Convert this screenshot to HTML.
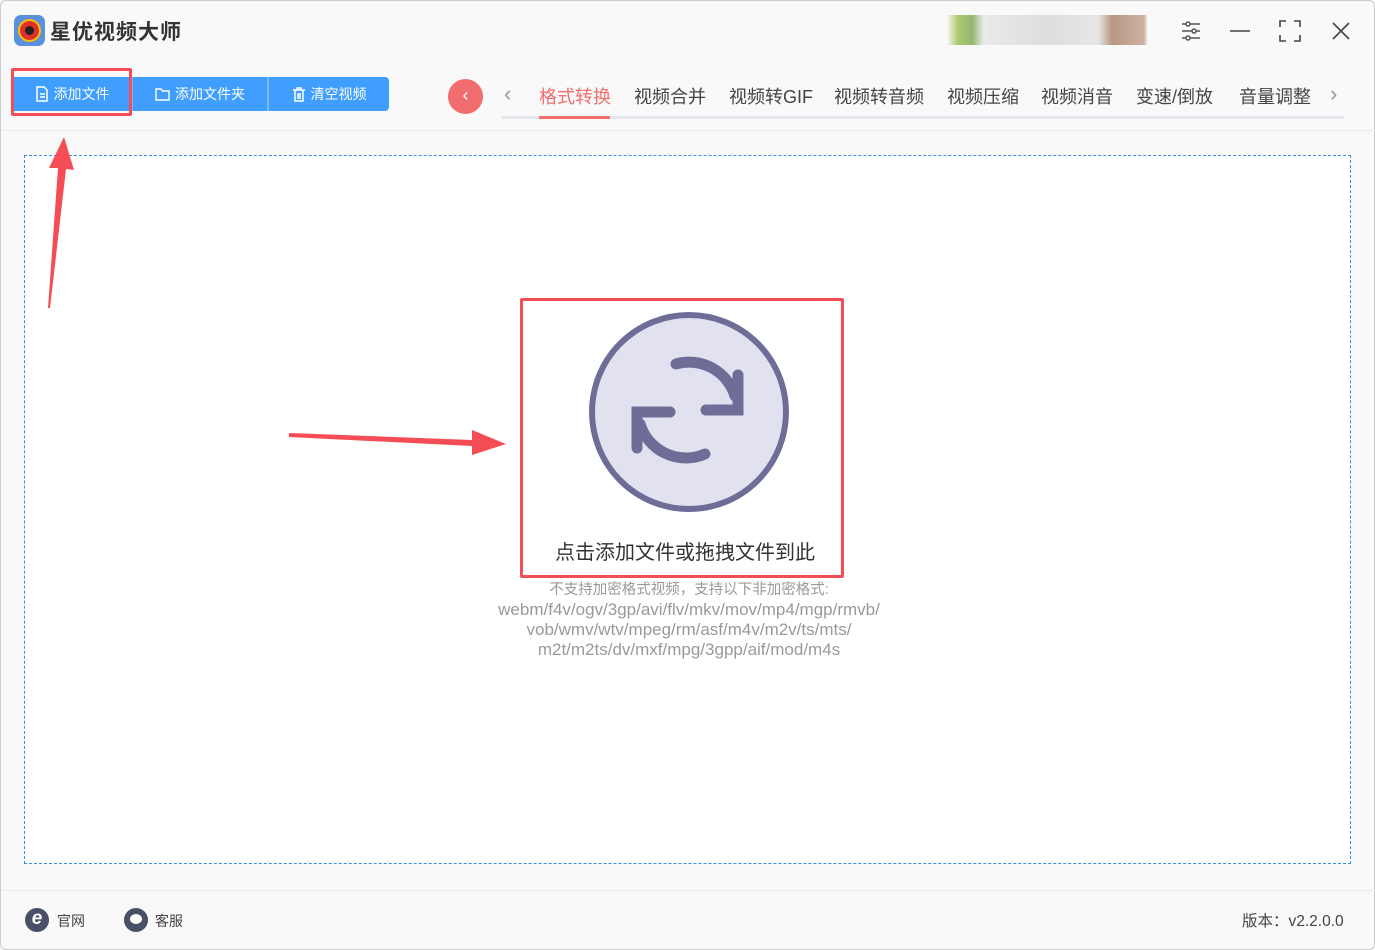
<!DOCTYPE html>
<html><head><meta charset="utf-8"><style>
*{margin:0;padding:0;box-sizing:border-box}
body{width:1375px;height:950px;background:#f9f9f9;font-family:"Liberation Sans","Noto Sans CJK SC",sans-serif;position:relative;overflow:hidden;border:1px solid #ccc;border-radius:6px}
.abs{position:absolute}
.title{left:49px;top:15px;font-size:21px;font-weight:bold;color:#333;letter-spacing:1px}
.btn{top:76px;height:34px;background:#409eff;color:#fff;font-size:14px;line-height:34px;text-align:center}
.tab{top:82px;font-size:18px;color:#444}
.fmt{width:100%;text-align:center;color:#999;font-size:17px;line-height:20px}
</style></head><body>
<div class="abs" style="left:13px;top:14px;width:31px;height:31px;border-radius:7px;background:#5b8fe0"></div>
<div class="abs" style="left:17px;top:18px;width:23px;height:23px;border-radius:50%;background:#f5c200"></div>
<div class="abs" style="left:19px;top:20px;width:19px;height:19px;border-radius:50%;background:#e0302b"></div>
<div class="abs" style="left:24px;top:25px;width:9px;height:9px;border-radius:50%;background:#222"></div>
<div class="abs title">星优视频大师</div>
<div class="abs" style="left:947px;top:14px;width:200px;height:30px;background:linear-gradient(90deg,#eef3e0 0,#9bbd4e 5%,#7aa64a 12%,#e6e6e6 18%,#d6d6d6 50%,#e2e2e2 75%,#a88068 82%,#c2a08a 98%,#fff 100%);opacity:.8"></div>
<svg class="abs" style="left:1179px;top:19px" width="22" height="22" viewBox="0 0 22 22" stroke="#555" stroke-width="1.5" fill="none"><path d="M2 4h18M2 11h18M2 18h18"/><circle cx="8" cy="4" r="2" fill="#fff"/><circle cx="14" cy="11" r="2" fill="#fff"/><circle cx="8" cy="18" r="2" fill="#fff"/></svg>
<svg class="abs" style="left:1227px;top:19px" width="24" height="22" stroke="#444" stroke-width="1.6" fill="none"><path d="M2 11h20"/></svg>
<svg class="abs" style="left:1277px;top:18px" width="24" height="24" stroke="#444" stroke-width="1.6" fill="none"><path d="M2 8V2h6M16 2h6v6M22 16v6h-6M8 22H2v-6"/></svg>
<svg class="abs" style="left:1329px;top:19px" width="22" height="22" stroke="#444" stroke-width="1.6" fill="none"><path d="M3 3l16 16M19 3L3 19"/></svg>

<div class="abs btn" style="left:13px;width:116px">
<svg width="14" height="16" style="vertical-align:-3px;margin-right:5px" stroke="#fff" stroke-width="1.5" fill="none"><path d="M2 1h7l3 3v11H2z M5 8h5M5 11h5"/></svg>添加文件</div>
<div class="abs btn" style="left:132px;width:134px">
<svg width="15" height="14" style="vertical-align:-2px;margin-right:5px" stroke="#fff" stroke-width="1.4" fill="none"><path d="M1 2h5l1.5 2H14v9H1z"/></svg>添加文件夹</div>
<div class="abs btn" style="left:268px;width:120px;border-radius:0 4px 4px 0">
<svg width="14" height="15" style="vertical-align:-3px;margin-right:5px" stroke="#fff" stroke-width="1.5" fill="none"><path d="M1 3h12M5 3V1h4v2M3 3v11h8V3M6 6v6M8 6v6"/></svg>清空视频</div>
<div class="abs" style="left:130px;top:76px;width:2px;height:34px;background:#7bb8ff"></div>
<div class="abs" style="left:266px;top:76px;width:2px;height:34px;background:#7bb8ff"></div>
<div class="abs" style="left:10px;top:67px;width:121px;height:48px;border:3px solid #f54d55;border-radius:2px"></div>

<div class="abs" style="left:447px;top:78px;width:35px;height:35px;border-radius:50%;background:#f26d6e;color:#fff;text-align:center;line-height:33px;font-size:18px">‹</div>
<div class="abs" style="left:503px;top:80px;color:#999;font-size:22px">‹</div>
<div class="abs" style="left:1329px;top:80px;color:#999;font-size:22px">›</div>
<div class="abs" style="left:501px;top:115px;width:842px;height:3px;background:#e3e6ec"></div>
<div class="abs" style="left:538px;top:115px;width:71px;height:3px;background:#f26d6e"></div>
<div class="abs tab" style="left:538px;color:#f26d6e">格式转换</div>
<div class="abs tab" style="left:633px">视频合并</div>
<div class="abs tab" style="left:728px">视频转GIF</div>
<div class="abs tab" style="left:833px">视频转音频</div>
<div class="abs tab" style="left:946px">视频压缩</div>
<div class="abs tab" style="left:1040px">视频消音</div>
<div class="abs tab" style="left:1135px">变速/倒放</div>
<div class="abs tab" style="left:1238px">音量调整</div>
<div class="abs" style="left:0;top:129px;width:1375px;height:1px;background:#ebebeb"></div>

<div class="abs" style="left:23px;top:154px;width:1327px;height:709px;border:1px dashed #3a8ee6;background:#fff"></div>

<svg class="abs" style="left:-1px;top:-1px" width="1375" height="950">
<polygon points="64,137 74,170 66,169 50,308 48,308 58,168 49,168" fill="#f54d55"/>
<polygon points="289,433 472,440 472,430 506,444 472,455 472,446 289,437" fill="#f54d55"/>
<circle cx="689" cy="412" r="97" fill="#e2e1f0" stroke="#6e6d98" stroke-width="6"/>
<g stroke="#6e6d98" stroke-width="11" stroke-linecap="round" fill="none">
<path d="M676 364 A48 48 0 0 1 735 396"/>
<path d="M738 375 V410 H706"/>
<path d="M705 454 A48 48 0 0 1 640 424"/>
<path d="M637 448 V412 H670"/>
</g>
</svg>
<div class="abs" style="left:519px;top:297px;width:324px;height:280px;border:3px solid #f54d55;border-radius:2px"></div>
<div class="abs" style="left:522px;top:535px;width:324px;text-align:center;font-size:20px;color:#333">点击添加文件或拖拽文件到此</div>
<div class="abs" style="left:380px;top:579px;width:616px">
<div class="fmt" style="font-size:14.5px">不支持加密格式视频，支持以下非加密格式:</div>
<div class="fmt">webm/f4v/ogv/3gp/avi/flv/mkv/mov/mp4/mgp/rmvb/</div>
<div class="fmt">vob/wmv/wtv/mpeg/rm/asf/m4v/m2v/ts/mts/</div>
<div class="fmt">m2t/m2ts/dv/mxf/mpg/3gpp/aif/mod/m4s</div>
</div>

<div class="abs" style="left:0;top:889px;width:1375px;height:1px;background:#ebebeb"></div>
<div class="abs" style="left:24px;top:907px;width:24px;height:24px;border-radius:50%;background:#4a5068;color:#fff;font-size:19px;font-style:italic;font-weight:bold;text-align:center;line-height:22px">e</div>
<div class="abs" style="left:56px;top:910px;font-size:14px;color:#444">官网</div>
<div class="abs" style="left:123px;top:907px;width:24px;height:24px;border-radius:50%;background:#4a5068"></div>
<div class="abs" style="left:129px;top:913px;width:12px;height:10px;border-radius:50%;background:#fff"></div>
<div class="abs" style="left:154px;top:910px;font-size:14px;color:#444">客服</div>
<div class="abs" style="left:1241px;top:908px;font-size:15.5px;color:#444">版本：v2.2.0.0</div>
</body></html>
